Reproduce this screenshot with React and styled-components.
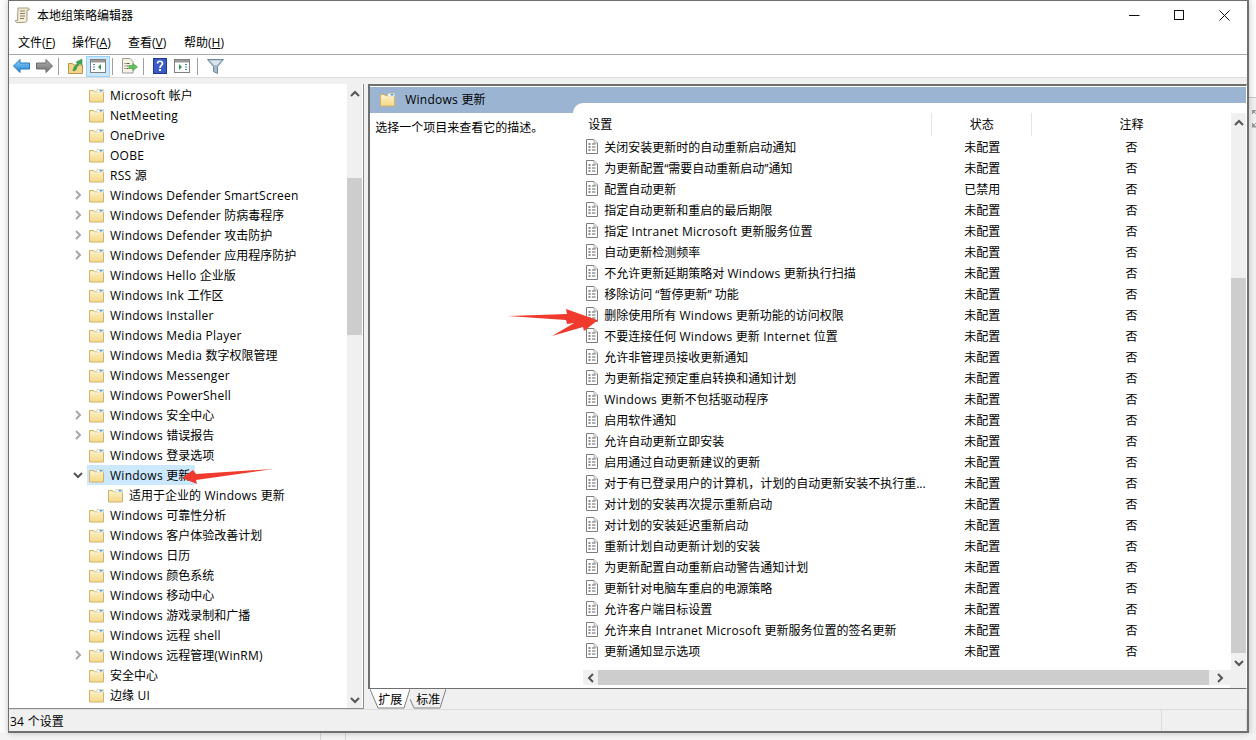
import React from "react";
import styled, { createGlobalStyle } from "styled-components";

const Global = createGlobalStyle`
  html, body { margin: 0; padding: 0; background: #fbfbfb; }
  body { font-family: "Open Sans", "Noto Sans CJK SC", sans-serif; font-size: 12px; color: #000; }
  * { box-sizing: border-box; }
`;

const Page = styled.div`
  width: 1256px; height: 740px; overflow: hidden; position: relative;
  display: flex; flex-direction: column;
`;
const TopRow = styled.div`display: flex; height: 733px; padding-left: 8px;`;
const Win = styled.div`
  width: 1241px; height: 733px; background: #fff; display: flex; flex-direction: column;
  border: 1px solid #6f6f6f; border-right-width: 2px; border-bottom-width: 2px;
  box-shadow: 0 0 6px rgba(0,0,0,.22);
  position: relative; z-index: 1;
`;
const RightStrip = styled.div`
  flex: 1; margin-top: 97px; background: #f0f0f0; border-top: 1px solid #c8c8c8;
  padding: 12px 0 0 3px;
`;
const BottomStrip = styled.div`
  height: 7px; background: #f3f3f3; display: flex; padding-left: 320px; gap: 24px;
`;
const StripLine = styled.div`width: 1px; background: #d6d6d6;`;

const TitleBar = styled.div`display: flex; align-items: center; height: 31px; padding-left: 6px; flex: none;`;
const TitleIcon = styled.svg`margin-top: -2px; flex: none;`;
const TitleText = styled.div`margin: -3px 0 0 7px; font-size: 12px; flex: 1;`;
const WinBtn = styled.div`width: 45px; height: 31px; display: flex; align-items: center; justify-content: center; margin-top: -2px;`;
const MenuBar = styled.div`
  display: flex; height: 23px; flex: none; padding: 0 0 2px 9px; align-items: center;
  border-bottom: 1px solid #a8a8a8;
`;
const MenuItem = styled.div`width: ${p => p.$w || 56}px; font-size: 12px; u { text-underline-offset: 1px; }`;
const ToolBar = styled.div`display: flex; height: 22px; flex: none; align-items: center; padding-left: 2px; background: #fff;`;
const ToolBtn = styled.div`
  width: ${p => p.$w || 22}px; height: 21px; display: flex; align-items: center; justify-content: center; flex: none;
  background: ${p => p.$on ? "#cce8ff" : "transparent"};
  border: 1px solid ${p => p.$on ? "#99d1ff" : "transparent"};
`;
const ToolSep = styled.div`width: 1px; height: 17px; flex: none; background: #a0a0a0; margin: 0 ${p => p.$r}px 0 ${p => p.$l}px;`;
const Band = styled.div`height: 7px; flex: none; background: #f0f0f0; border-top: 1px solid #dcdcdc;`;

const Main = styled.div`flex: 1; display: flex; min-height: 0; background: #f0f0f0;`;
const TreePane = styled.div`
  width: 356px; display: flex; background: #fff; border-right: 1px solid #8c8c8c;
  border-bottom: 1px solid #8c8c8c; position: relative;
`;
const TreeList = styled.div`flex: 1; padding-top: 1px; min-width: 0; overflow: hidden;`;
const TreeRow = styled.div`
  height: 20px; display: flex; align-items: center; padding-left: ${p => p.$child ? 97 : 61}px;
  white-space: nowrap;
`;
const TreeChevron = styled.div`width: 15px; height: 20px; margin-right: 2px; display: flex; align-items: center; justify-content: center; flex: none;`;
const TreeItem = styled.div`
  display: flex; align-items: center; height: 20px;
  background: ${p => p.$sel ? "#cce8ff" : "transparent"}; padding: 0 5px 0 2px; gap: 6px;
`;
const Lat = styled.span`letter-spacing: .26px;`;
const VBar = styled.div`
  width: 15px; flex: none; background: #f0f0f0; display: flex; flex-direction: column; align-items: stretch;
`;
const BarBtn = styled.div`height: ${p => p.$h || 20}px; flex: none; display: flex; align-items: center; justify-content: center;`;
const VThumb = styled.div`height: ${p => p.$h}px; flex: none; background: #cdcdcd;`;
const VFill = styled.div`flex: ${p => p.$h ? "none" : 1}; height: ${p => p.$h ? p.$h + "px" : "auto"};`;
const TreeGutter = styled.div`width: 1px; flex: none; background: #fff;`;

const RightCol = styled.div`width: 881px; margin-left: 4px; display: flex; flex-direction: column;`;
const RightPane = styled.div`
  height: 605px; flex: none; border: 2px solid #6f6f6f; border-right: 1px solid #fff; border-bottom: 1px solid #6f6f6f;
  background: #fff; display: flex; flex-direction: column;
`;
const PaneHeader = styled.div`
  height: 26px; flex: none; margin-top: 1px; background: #9ab4d1; display: flex; align-items: center;
  padding: 0 0 2px 10px; gap: 10px; font-size: 12px;
`;
const PaneBody = styled.div`flex: 1; display: flex; min-height: 0;`;
const Desc = styled.div`width: 203px; flex: none; padding: 5px 0 0 5px;`;
const ListArea = styled.div`
  flex: 1; margin-top: -10px; background: #fff; border-top-left-radius: 10px; padding-top: 10px;
  display: flex; flex-direction: column; min-width: 0; position: relative;
`;
const ListTop = styled.div`flex: 1; display: flex; min-height: 0;`;
const Table = styled.div`flex: 1; min-width: 0;`;
const HeadRow = styled.div`display: grid; grid-template-columns: 359px 100px 1fr; height: 23px; align-items: stretch;`;
const HeadCell = styled.div`
  display: flex; align-items: center; padding: 0 0 2px ${p => p.$first ? 15 : 0}px;
  justify-content: ${p => p.$first ? "flex-start" : "center"};
  border-right: ${p => p.$last ? "none" : "1px solid #e3e3e3"};
`;
const Row = styled.div`display: grid; grid-template-columns: 359px 100px 1fr; height: 21px; align-items: center;`;
const NameCell = styled.div`display: flex; align-items: center; padding-left: 13px; gap: 6px; white-space: nowrap;`;
const StateCell = styled.div`padding-left: 32px;`;
const NoteCell = styled.div`text-align: center;`;
const HBarRow = styled.div`height: 18px; flex: none; display: flex;`;
const HBarGap = styled.div`width: 10px; flex: none;`;
const HBar = styled.div`flex: 1; height: 15px; background: #f0f0f0; display: flex; min-width: 0;`;
const HBtn = styled.div`width: ${p => p.$w}px; flex: none; display: flex; align-items: center; justify-content: center;`;
const HThumb = styled.div`flex: 1; background: #cdcdcd;`;
const Corner = styled.div`width: 16px; flex: none; height: 18px; background: #f0f0f0;`;

const Tabs = styled.div`height: 20px; flex: none; display: flex; padding-left: 2px; background: #f0f0f0;`;
const Tab = styled.div`
  height: 20px; display: flex; align-items: center; justify-content: center; width: ${p => p.$w}px; position: relative;
`;
const TabShape = styled.svg`position: absolute; inset: 0; width: 100%; height: 100%;`;
const TabLabel = styled.span`position: relative;`;

const Status = styled.div`
  height: 22px; flex: none; background: #f0f0f0; border-top: 1px solid #dcdcdc; display: flex; align-items: center; padding-left: 1px;
`;
const StatusMain = styled.div`width: 1152px; flex: none; height: 100%; display: flex; align-items: center; border-right: 1px solid #dcdcdc;`;
const StatusMid = styled.div`width: 85px; flex: none; height: 100%; border-right: 1px solid #dcdcdc;`;

const Overlay = styled.svg`position: absolute; left: 0; top: 0; width: 1256px; height: 740px; z-index: 5; pointer-events: none;`;

/* Wraps the Latin runs of a label, which the reference sets slightly wider than its CJK text. */
const T = ({ children }) => {
  const parts = String(children).split(/([A-Za-z0-9().\- ]*[A-Za-z0-9][A-Za-z0-9().\- ]*)/);
  return <>{parts.map((p, i) => (i % 2 ? <Lat key={i}>{p}</Lat> : p))}</>;
};

const Folder = () => (
  <svg width="15" height="15" viewBox="0 0 15 15" style={{ flex: "none" }}>
    <defs>
      <linearGradient id="fold" x1="0" y1="0" x2="0" y2="1">
        <stop offset="0" stopColor="#fdf0c0" />
        <stop offset="1" stopColor="#f4d98c" />
      </linearGradient>
    </defs>
    <path d="M.5 2.500h4l1 1.500h9v10H.5z" fill="url(#fold)" stroke="#d2b26a" />
    <path d="M8 1.500h6.500v3H8z" fill="#fff" stroke="#d9cfa8" strokeWidth=".8" />
    <path d="M10.500 2h3v1.500h-3z" fill="#4f9bd8" />
    <path d="M1.500 5h12" stroke="#fff6d6" />
  </svg>
);
const DocIcon = () => (
  <svg width="12" height="15" viewBox="0 0 12 15" style={{ flex: "none" }}>
    <path d="M.5.5h7.500l3.500 3.500v10.500H.5z" fill="#fff" stroke="#7d7d7d" />
    <path d="M8 .5V4h3.500" fill="#eee" stroke="#b0b0b0" />
    <path d="M2.500 5h2M2.500 8h2M2.500 11h2" stroke="#1a1a1a" strokeWidth="1.200" />
    <path d="M6 5h3.500M6 8h3.500M6 11h3.500" stroke="#606060" />
  </svg>
);
const Chevron = ({ dir = "right", color = "#a6a6a6", w = 2 }) => {
  const d = { right: "M3 1l4 4-4 4", down: "M1 3l4 4 4-4", up: "M1 7l4-4 4 4", left: "M7 1l-4 4 4 4" }[dir];
  return <svg width="10" height="10" viewBox="0 0 10 10"><path d={d} fill="none" stroke={color} strokeWidth={w} /></svg>;
};

const treeData = [
  ["Microsoft 帐户"], ["NetMeeting"], ["OneDrive"], ["OOBE"], ["RSS 源"],
  ["Windows Defender SmartScreen", "c"], ["Windows Defender 防病毒程序", "c"], ["Windows Defender 攻击防护", "c"],
  ["Windows Defender 应用程序防护", "c"], ["Windows Hello 企业版"], ["Windows Ink 工作区"], ["Windows Installer"],
  ["Windows Media Player"], ["Windows Media 数字权限管理"], ["Windows Messenger"], ["Windows PowerShell"],
  ["Windows 安全中心", "c"], ["Windows 错误报告", "c"], ["Windows 登录选项"], ["Windows 更新", "o"],
  ["适用于企业的 Windows 更新", "k"], ["Windows 可靠性分析"], ["Windows 客户体验改善计划"], ["Windows 日历"],
  ["Windows 颜色系统"], ["Windows 移动中心"], ["Windows 游戏录制和广播"], ["Windows 远程 shell"],
  ["Windows 远程管理(WinRM)", "c"], ["安全中心"], ["边缘 UI"],
];

const rows = [
  ["关闭安装更新时的自动重新启动通知"], ["为更新配置“需要自动重新启动”通知"], ["配置自动更新", "已禁用"],
  ["指定自动更新和重启的最后期限"], ["指定 Intranet Microsoft 更新服务位置"], ["自动更新检测频率"],
  ["不允许更新延期策略对 Windows 更新执行扫描"], ["移除访问 “暂停更新” 功能"], ["删除使用所有 Windows 更新功能的访问权限"],
  ["不要连接任何 Windows 更新 Internet 位置"], ["允许非管理员接收更新通知"], ["为更新指定预定重启转换和通知计划"],
  ["Windows 更新不包括驱动程序"], ["启用软件通知"], ["允许自动更新立即安装"], ["启用通过自动更新建议的更新"],
  ["对于有已登录用户的计算机，计划的自动更新安装不执行重..."], ["对计划的安装再次提示重新启动"], ["对计划的安装延迟重新启动"],
  ["重新计划自动更新计划的安装"], ["为更新配置自动重新启动警告通知计划"], ["更新针对电脑车重启的电源策略"],
  ["允许客户端目标设置"], ["允许来自 Intranet Microsoft 更新服务位置的签名更新"], ["更新通知显示选项"],
];

export default function App() {
  return (
    <Page>
      <Global />
      <TopRow>
        <Win>
          <TitleBar>
            <TitleIcon width="15" height="17" viewBox="0 0 15 17">
              <path d="M3 1h10c1 0 1.500 1 1 2h-2v10c0 1.500-1 2.500-2.500 2.500H2c-1.200 0-1.800-1-1.500-2h2z" fill="#f4ecd4" stroke="#a39a80" />
              <path d="M5 4h5M5 6.500h5M5 9h5M5 11.500h4" stroke="#8a8066" />
            </TitleIcon>
            <TitleText>本地组策略编辑器</TitleText>
            <WinBtn>
              <svg width="11" height="11" viewBox="0 0 11 11"><path d="M0 5.500h10.500" stroke="#111" /></svg>
            </WinBtn>
            <WinBtn>
              <svg width="11" height="11" viewBox="0 0 11 11"><rect x=".5" y=".5" width="9" height="9" fill="none" stroke="#111" /></svg>
            </WinBtn>
            <WinBtn>
              <svg width="11" height="11" viewBox="0 0 11 11"><path d="M.5.500l10 10M10.500.500l-10 10" stroke="#111" /></svg>
            </WinBtn>
          </TitleBar>
          <MenuBar>
            <MenuItem $w={54}>文件(<u>F</u>)</MenuItem>
            <MenuItem>操作(<u>A</u>)</MenuItem>
            <MenuItem>查看(<u>V</u>)</MenuItem>
            <MenuItem>帮助(<u>H</u>)</MenuItem>
          </MenuBar>
          <ToolBar>
            <ToolBtn $w={20}>
              <svg width="17" height="14" viewBox="0 0 17 14">
                <defs>
                  <linearGradient id="bk" x1="0" y1="0" x2="0" y2="1">
                    <stop offset="0" stopColor="#8ed4fa" />
                    <stop offset="1" stopColor="#1f7fd0" />
                  </linearGradient>
                </defs>
                <path d="M7 .5L.5 7 7 13.500V10h9.500V4H7z" fill="url(#bk)" stroke="#2478bd" />
              </svg>
            </ToolBtn>
            <ToolBtn $w={26}>
              <svg width="17" height="14" viewBox="0 0 17 14">
                <defs>
                  <linearGradient id="fw" x1="0" y1="0" x2="0" y2="1">
                    <stop offset="0" stopColor="#b4b4b4" />
                    <stop offset="1" stopColor="#6e6e6e" />
                  </linearGradient>
                </defs>
                <path d="M10 .5L16.500 7 10 13.500V10H.5V4H10z" fill="url(#fw)" stroke="#6a6a6a" />
              </svg>
            </ToolBtn>
            <ToolSep $l={1} $r={6} />
            <ToolBtn $w={21}>
              <svg width="16" height="16" viewBox="0 0 16 16">
                <path d="M.5 5.500h4l1.500 1.500h8.500v8.500H.5z" fill="#f3d488" stroke="#b8934a" />
                <path d="M5 13c.5-4 2-6 4.500-7L8 4l6-3v6l-2-1.500C10 7 8.500 9 8 12z" fill="#3aa655" stroke="#2a8a44" strokeWidth=".5" />
              </svg>
            </ToolBtn>
            <ToolBtn $on $w={24}>
              <svg width="16" height="14" viewBox="0 0 16 14">
                <rect x=".5" y=".5" width="15" height="13" fill="#fff" stroke="#808080" />
                <rect x="1" y="1" width="14" height="2.500" fill="#9a9a9a" />
                <path d="M3 5.500h2M3 8h2M3 10.500h2" stroke="#4d82b0" strokeWidth="1.200" />
                <path d="M11 5v6L8 8z" fill="#2f9c55" />
              </svg>
            </ToolBtn>
            <ToolSep $l={2} $r={6} />
            <ToolBtn $w={20}>
              <svg width="17" height="16" viewBox="0 0 17 16">
                <path d="M1.500.5H9l3 3V15H1.500z" fill="#f7f3e0" stroke="#9a9a9a" />
                <path d="M3.500 5.500h1M5.500 5.500h3M3.500 8h1M5.500 8h2M3.500 10.500h1M5.500 10.500h2" stroke="#555" />
                <path d="M8 7.500h4V5.500l4.500 3.500-4.500 3.500v-2H8z" fill="#62c45f" stroke="#3d963d" strokeWidth=".6" />
              </svg>
            </ToolBtn>
            <ToolSep $l={4} $r={6} />
            <ToolBtn $w={20}>
              <svg width="14" height="16" viewBox="0 0 14 16">
                <rect width="14" height="16" fill="#22388f" />
                <rect x="1" y="1" width="12" height="14" fill="#3a5cc6" />
                <path d="M4.500 5.500C4.500 2.500 9.500 2.500 9.500 5.500 9.500 7.500 7 7.500 7 10" fill="none" stroke="#fff" strokeWidth="1.700" />
                <rect x="6" y="11" width="2" height="2" fill="#fff" />
              </svg>
            </ToolBtn>
            <ToolBtn $w={24}>
              <svg width="16" height="14" viewBox="0 0 16 14">
                <rect x=".5" y=".5" width="15" height="13" fill="#fff" stroke="#808080" />
                <rect x="1" y="1" width="14" height="2.500" fill="#9a9a9a" />
                <path d="M11 5.500h2M11 8h2M11 10.500h2" stroke="#4d82b0" strokeWidth="1.200" />
                <path d="M5 5v6l3-3z" fill="#2f9c55" />
              </svg>
            </ToolBtn>
            <ToolSep $l={3} $r={4} />
            <ToolBtn $w={26}>
              <svg width="17" height="15" viewBox="0 0 17 15">
                <path d="M.5.500h16L10.500 7.500V14.500l-4-2V7.500z" fill="#a6bccd" stroke="#6f8698" />
                <path d="M3 1.500h11L10 6H7z" fill="#dbe6ee" />
              </svg>
            </ToolBtn>
          </ToolBar>
          <Band />
          <Main>
            <TreePane>
              <TreeList>
                {treeData.map(([t, k], i) => (
                  <TreeRow key={i} $child={k === "k"}>
                    {k !== "k" && (
                      <TreeChevron>
                        {k === "c" && <Chevron />}
                        {k === "o" && <Chevron dir="down" color="#555" />}
                      </TreeChevron>
                    )}
                    <TreeItem $sel={k === "o"}>
                      <Folder />
                      <span><T>{t}</T></span>
                    </TreeItem>
                  </TreeRow>
                ))}
              </TreeList>
              <VBar>
                <BarBtn><Chevron dir="up" color="#555" /></BarBtn>
                <VFill $h={74} />
                <VThumb $h={157} />
                <VFill />
                <BarBtn $h={16}><Chevron dir="down" color="#555" /></BarBtn>
              </VBar>
              <TreeGutter />
            </TreePane>
            <RightCol>
              <RightPane>
                <PaneHeader>
                  <Folder />
                  <span><T>Windows 更新</T></span>
                </PaneHeader>
                <PaneBody>
                  <Desc>选择一个项目来查看它的描述。</Desc>
                  <ListArea>
                    <ListTop>
                      <Table>
                        <HeadRow>
                          <HeadCell $first>设置</HeadCell>
                          <HeadCell>状态</HeadCell>
                          <HeadCell $last>注释</HeadCell>
                        </HeadRow>
                        {rows.map(([t, s], i) => (
                          <Row key={i}>
                            <NameCell><DocIcon /><span><T>{t}</T></span></NameCell>
                            <StateCell>{s || "未配置"}</StateCell>
                            <NoteCell>否</NoteCell>
                          </Row>
                        ))}
                      </Table>
                      <VBar>
                        <BarBtn><Chevron dir="up" color="#555" /></BarBtn>
                        <VFill $h={145} />
                        <VThumb $h={375} />
                        <VFill />
                        <BarBtn><Chevron dir="down" color="#555" /></BarBtn>
                      </VBar>
                    </ListTop>
                    <HBarRow>
                      <HBarGap />
                      <HBar>
                        <HBtn $w={15}><Chevron dir="left" color="#555" /></HBtn>
                        <HThumb />
                        <HBtn $w={21}><Chevron dir="right" color="#555" /></HBtn>
                      </HBar>
                      <Corner />
                    </HBarRow>
                  </ListArea>
                </PaneBody>
              </RightPane>
              <Tabs>
                <Tab $w={40}>
                  <TabShape viewBox="0 0 40 20" preserveAspectRatio="none"><path d="M0 0L8 19H34L40 0" fill="#fff" stroke="#808080" /></TabShape>
                  <TabLabel>扩展</TabLabel>
                </Tab>
                <Tab $w={36}>
                  <TabShape viewBox="0 0 36 20" preserveAspectRatio="none"><path d="M0 10L4 19H30L36 0" fill="#f0f0f0" stroke="#808080" /></TabShape>
                  <TabLabel>标准</TabLabel>
                </Tab>
              </Tabs>
            </RightCol>
          </Main>
          <Status>
            <StatusMain><span><T>34 个设置</T></span></StatusMain>
            <StatusMid />
          </Status>
        </Win>
        <RightStrip>
          <svg width="7" height="18" viewBox="0 0 7 18"><path d="M0 0h4L0 4zM5 4l2 2M1 1l6 6" fill="#999" stroke="#999" /><path d="M0 17h4L0 13zM1 16l6-6" fill="#999" stroke="#999" /></svg>
        </RightStrip>
      </TopRow>
      <BottomStrip>
        <StripLine />
        <StripLine />
      </BottomStrip>
      <Overlay viewBox="0 0 1256 740">
        <path d="M273 469L196 474 193 470 182 478 197 484 196 480z" fill="#f03a2e" />
        <path d="M508 316L567 314 566 309 597 320 567 324 566 320z" fill="#f03a2e" />
        <path d="M552 336L581 319 598 320 584 331 583 327z" fill="#f03a2e" />
      </Overlay>
    </Page>
  );
}
